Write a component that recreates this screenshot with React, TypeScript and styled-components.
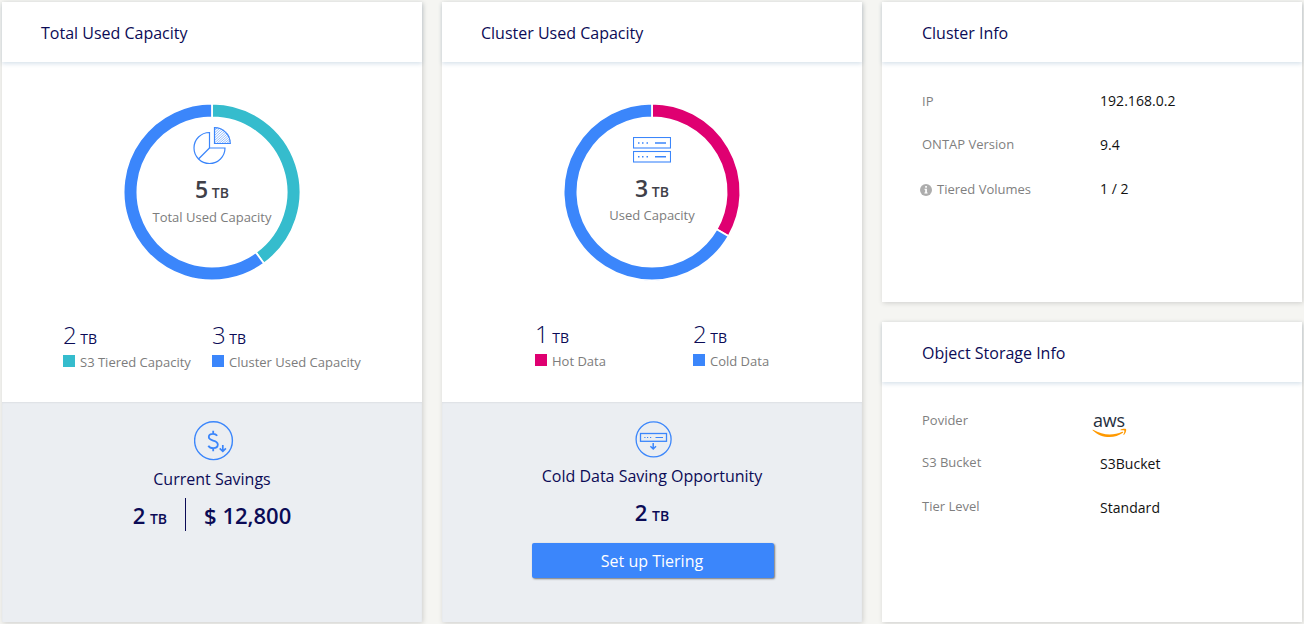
import React from 'react';
import styled, { createGlobalStyle } from 'styled-components';

const BLUE = '#3b86fb';
const TEAL = '#35bccd';
const PINK = '#df0071';
const NAVY = '#0b0b56';

const GlobalStyle = createGlobalStyle`
  * { box-sizing: border-box; }
  body {
    margin: 0;
    background: #f5f5f2;
    font-family: 'Open Sans', 'Noto Sans', sans-serif;
    overflow: hidden;
  }
  svg { display: block; flex: none; }
`;

const Dashboard = styled.main`
  display: grid;
  grid-template-columns: repeat(3, 420px);
  gap: 20px;
  width: 1304px;
  height: 624px;
  padding: 2px;
`;

const Column = styled.div`
  display: flex;
  flex-direction: column;
  gap: 20px;
`;

const Card = styled.section<{ $height?: number }>`
  display: flex;
  flex-direction: column;
  height: ${(p) => p.$height ?? 620}px;
  background: #fff;
  box-shadow: 1px 1px 5px 0 rgba(0, 0, 0, 0.16);
`;

const CardHeader = styled.header`
  height: 60px;
  flex: none;
  padding: 1px 39px 0;
  font-size: 16px;
  line-height: 60px;
  color: ${NAVY};
  box-shadow: 0 2px 4px rgba(70, 120, 160, 0.2);
`;

const InfoHeader = styled(CardHeader)`
  padding-left: 40px;
`;

const ChartArea = styled.div`
  display: grid;
  justify-content: center;
  height: 256px;
  padding-top: 42px;
  > * { grid-area: 1 / 1; }
`;

const ChartCenter = styled.div<{ $top: number }>`
  display: flex;
  flex-direction: column;
  align-items: center;
  padding-top: ${(p) => p.$top}px;
`;

const Total = styled.div<{ $gap: number }>`
  margin-top: ${(p) => p.$gap}px;
  font-size: 23px;
  line-height: 32px;
  font-weight: 600;
  color: #404048;
  white-space: pre;
  small { font-size: 14px; }
`;

const TotalLabel = styled.div<{ $gap: number }>`
  margin-top: ${(p) => p.$gap}px;
  font-size: 13px;
  line-height: 20px;
  color: #7c7c7c;
`;

const Legend = styled.div<{ $left: number; $columns: string; $top: number }>`
  display: grid;
  grid-template-columns: ${(p) => p.$columns};
  height: 84px;
  padding: ${(p) => p.$top}px 0 0 ${(p) => p.$left}px;
`;

const LegendValue = styled.div`
  font-size: 24px;
  line-height: 32px;
  height: 33px;
  font-weight: 300;
  color: ${NAVY};
  white-space: pre;
  small { font-size: 14px; font-weight: 380; }
`;

const LegendLabel = styled.div`
  display: flex;
  align-items: center;
  gap: 5px;
  height: 20px;
  font-size: 13px;
  line-height: 20px;
  color: #7c7c7c;
  white-space: nowrap;
`;

const Swatch = styled.i<{ $color: string }>`
  width: 12px;
  height: 12px;
  margin-top: -2px;
  background: ${(p) => p.$color};
`;

const Summary = styled.div`
  display: flex;
  flex-direction: column;
  align-items: center;
  flex: 1;
  padding-top: 19px;
  background: #ebeef2;
  color: ${NAVY};
  box-shadow: inset 0 1px 2px rgba(0, 0, 0, 0.06);
  > svg { margin-left: 3px; }
`;

const SummaryTitle = styled.div<{ $gap: number }>`
  margin-top: ${(p) => p.$gap}px;
  font-size: 16px;
  line-height: 24px;
`;

const SummaryValues = styled.div`
  display: flex;
  align-items: center;
  height: 34px;
  margin-top: 6px;
  font-size: 22px;
  line-height: 34px;
  font-weight: 600;
  white-space: pre;
  span { padding-top: 2px; }
  small { font-size: 14px; line-height: 0; margin-left: 1px; }
`;

const Divider = styled.i`
  width: 1px;
  height: 33px;
  margin: 0 18px 0 18px;
  background: ${NAVY};
`;

const TieringButton = styled.button`
  width: 242px;
  height: 35px;
  margin: 15px 0 0 2px;
  padding: 1px 2px 0 0;
  border: 0;
  border-radius: 2px;
  background: ${BLUE};
  color: #fff;
  font: 400 16px/34px 'Open Sans', sans-serif;
  box-shadow: 1px 1px 2px rgba(0, 0, 0, 0.5);
`;

const InfoList = styled.dl<{ $top: number }>`
  margin: 0;
  padding: ${(p) => p.$top}px 40px 0;
`;

const InfoRow = styled.div<{ $height: number }>`
  display: grid;
  grid-template-columns: 178px 1fr;
  height: ${(p) => p.$height}px;
`;

const InfoLabel = styled.dt<{ $lift?: number }>`
  display: flex;
  align-items: center;
  height: 20px;
  margin-top: ${(p) => -(p.$lift ?? 0)}px;
  font-size: 13px;
  line-height: 20px;
  color: #7f7f7f;
`;

const InfoValue = styled.dd<{ $shift?: number }>`
  margin: ${(p) => p.$shift ?? 0}px 0 0;
  font-size: 14px;
  line-height: 20px;
  color: #111;
  letter-spacing: 0.04px;
`;

const InfoIcon = styled.svg`
  margin: 1px 5px 0 -2px;
`;

const AwsMark = styled.div`
  width: 36px;
  margin: -1px 0 0 -8px;
  font-size: 18px;
  line-height: 20px;
  font-weight: 500;
  letter-spacing: -0.2px;
  color: #252f3e;
  text-indent: 1px;
  svg { margin-top: -2px; }
`;

type Slice = { color: string; value: number };

const SIZE = 176;
const OUTER = 87.5;
const INNER = 75.5;

function point(radius: number, turn: number) {
  const a = turn * Math.PI * 2;
  return `${88 + radius * Math.sin(a)} ${88 - radius * Math.cos(a)}`;
}

function Donut({ slices }: { slices: Slice[] }) {
  const total = slices.reduce((sum, s) => sum + s.value, 0);
  let start = 0;
  const arcs = slices.map((s) => {
    const from = start;
    const to = from + s.value / total;
    start = to;
    const large = to - from > 0.5 ? 1 : 0;
    return (
      <path
        key={s.color}
        fill={s.color}
        stroke="#fff"
        strokeWidth="1.8"
        d={`M${point(OUTER + 0.9, from)}A${OUTER + 0.9} ${OUTER + 0.9} 0 ${large} 1 ${point(OUTER + 0.9, to)}L${point(INNER - 0.9, to)}A${INNER - 0.9} ${INNER - 0.9} 0 ${large} 0 ${point(INNER - 0.9, from)}Z`}
      />
    );
  });
  return (
    <svg width={SIZE} height={SIZE} viewBox="0 0 176 176" overflow="visible">
      {arcs}
    </svg>
  );
}

function PieIcon() {
  return (
    <svg width="38" height="38" viewBox="0 0 38 38" fill="none" stroke={BLUE} strokeWidth="1.2">
      <path d="M16.5 5.5A15.5 15.5 0 1 0 32 21H16.5Z" />
      <path d="M16.5 21L5.5 32" />
      <path d="M21.5 0.7V16.5H37.3A15.8 15.8 0 0 0 21.5 0.7Z" />
      <path
        strokeWidth="0.55"
        d="M21.5 3.5L24.3 0.9M21.5 6L26.4 1.4M21.5 8.5L28.3 2.1M21.5 11L30.2 3M21.5 13.5L32 4M21.5 16L33.4 5.2M23.5 16.5L34.8 6.4M26 16.5L35.8 7.9M28.5 16.5L36.5 9.7M31 16.5L37 11.6M33.5 16.5L37.3 13.6"
      />
    </svg>
  );
}

function ServerIcon() {
  return (
    <svg width="38" height="26" viewBox="0 0 38 26" fill="none" stroke={BLUE} strokeWidth="1.1">
      <rect x="0.5" y="0.5" width="37" height="10.5" />
      <rect x="0.5" y="14.5" width="37" height="10.5" />
      <path d="M5 6H6.5M9 6H10.5M13.5 6H15M22 6H33M5 19.7H6.5M9 19.7H10.5M13.5 19.7H15M22 19.7H33" strokeWidth="1.4" />
    </svg>
  );
}

function SavingsIcon() {
  return (
    <svg width="40" height="40" viewBox="0 0 40 40" fill="none" stroke={BLUE} strokeWidth="1.4">
      <circle cx="19.5" cy="19.7" r="18.9" />
      <path strokeWidth="1.8" d="M23.2 14.8C22.2 13.4 20.8 12.8 19.1 12.8C16.5 12.8 14.8 14.1 14.8 16.1C14.8 20.8 23.8 18.3 23.8 23.6C23.8 25.9 21.9 27.2 19.2 27.2C17 27.2 15.3 26.4 14.3 24.7M19.2 9.8V13M19.2 27.2V30.2" />
      <path strokeWidth="1.7" d="M28.8 24V30.2M25.7 27.4L28.8 30.3L31.9 27.4" />
    </svg>
  );
}

function ColdDataIcon() {
  return (
    <svg width="38" height="38" viewBox="0 0 38 38" fill="none" stroke={BLUE} strokeWidth="1.3">
      <circle cx="18.6" cy="18.3" r="17.5" />
      <rect x="5.5" y="12.5" width="26" height="7.8" />
      <path strokeWidth="1.2" d="M9.3 16.5H10.5M12 16.5H13.2M15 16.5H16.2M20.5 16.5H28" />
      <path strokeWidth="1.5" d="M18.2 22V27.7M15.4 25.3L18.2 28L21 25.3" />
    </svg>
  );
}

function Info() {
  return (
    <InfoIcon width="12" height="12" viewBox="0 0 12 12">
      <circle cx="6" cy="6" r="6" fill="#adadad" />
      <path d="M5.2 2.1H6.9V3.7H5.2ZM4.5 4.8H6.9V8.5H7.6V9.5H4.4V8.5H5.2V5.7H4.5Z" fill="#fff" />
    </InfoIcon>
  );
}

function AwsLogo() {
  return (
    <AwsMark>
      aws
      <svg width="36" height="11" viewBox="0 0 36 11">
        <path d="M0.6 2.2C0.3 1.9 0.6 1.5 1.1 1.8C11 7.6 21.5 7.7 30.2 3.8C31 3.5 31.5 4.2 30.9 4.8C22.3 11.2 8.8 10.4 0.6 2.2Z" fill="#f90" />
        <path d="M28.4 1.8C30 0.6 33.2 0.5 34 1.1C34.6 1.8 33.9 5.3 32 6.9C31.7 7.2 31.3 7 31.5 6.5C32 5.3 32.7 3.1 32.3 2.6C31.8 2 29.7 2.2 28.6 2.3C28.2 2.3 28.2 2 28.4 1.8Z" fill="#f90" />
      </svg>
    </AwsMark>
  );
}

function LegendItem({ value, label, color }: { value: string; label: string; color: string }) {
  return (
    <div>
      <LegendValue>
        {value}
        <small> TB</small>
      </LegendValue>
      <LegendLabel>
        <Swatch $color={color} />
        {label}
      </LegendLabel>
    </div>
  );
}

export default function App() {
  return (
    <>
      <GlobalStyle />
      <Dashboard>
        <Card>
          <CardHeader>Total Used Capacity</CardHeader>
          <ChartArea>
            <Donut slices={[{ color: TEAL, value: 2 }, { color: BLUE, value: 3 }]} />
            <ChartCenter $top={23}>
              <PieIcon />
              <Total $gap={8}>5<small> TB</small></Total>
              <TotalLabel $gap={-2}>Total Used Capacity</TotalLabel>
            </ChartCenter>
          </ChartArea>
          <Legend $left={61} $columns="149px 1fr" $top={1}>
            <LegendItem value="2" label="S3 Tiered Capacity" color={TEAL} />
            <LegendItem value="3" label="Cluster Used Capacity" color={BLUE} />
          </Legend>
          <Summary>
            <SavingsIcon />
            <SummaryTitle $gap={6}>Current Savings</SummaryTitle>
            <SummaryValues>
              <span>2<small> TB</small></span>
              <Divider />
              <span>$ 12,800</span>
            </SummaryValues>
          </Summary>
        </Card>

        <Card>
          <CardHeader>Cluster Used Capacity</CardHeader>
          <ChartArea>
            <Donut slices={[{ color: PINK, value: 1 }, { color: BLUE, value: 2 }]} />
            <ChartCenter $top={33}>
              <ServerIcon />
              <Total $gap={9}>3<small> TB</small></Total>
              <TotalLabel $gap={-3}>Used Capacity</TotalLabel>
            </ChartCenter>
          </ChartArea>
          <Legend $left={93} $columns="158px 1fr" $top={0}>
            <LegendItem value="1" label="Hot Data" color={PINK} />
            <LegendItem value="2" label="Cold Data" color={BLUE} />
          </Legend>
          <Summary>
            <ColdDataIcon />
            <SummaryTitle $gap={5}>Cold Data Saving Opportunity</SummaryTitle>
            <SummaryValues>
              <span>2<small> TB</small></span>
            </SummaryValues>
            <TieringButton>Set up Tiering</TieringButton>
          </Summary>
        </Card>

        <Column>
          <Card $height={300}>
            <InfoHeader>Cluster Info</InfoHeader>
            <InfoList $top={29}>
              <InfoRow $height={44}>
                <InfoLabel>IP</InfoLabel>
                <InfoValue>192.168.0.2</InfoValue>
              </InfoRow>
              <InfoRow $height={44}>
                <InfoLabel $lift={1}>ONTAP Version</InfoLabel>
                <InfoValue>9.4</InfoValue>
              </InfoRow>
              <InfoRow $height={44}>
                <InfoLabel><Info />Tiered Volumes</InfoLabel>
                <InfoValue>1 / 2</InfoValue>
              </InfoRow>
            </InfoList>
          </Card>
          <Card $height={300}>
            <InfoHeader>Object Storage Info</InfoHeader>
            <InfoList $top={29}>
              <InfoRow $height={42}>
                <InfoLabel $lift={1}>Povider</InfoLabel>
                <InfoValue><AwsLogo /></InfoValue>
              </InfoRow>
              <InfoRow $height={44}>
                <InfoLabel $lift={1}>S3 Bucket</InfoLabel>
                <InfoValue $shift={1}>S3Bucket</InfoValue>
              </InfoRow>
              <InfoRow $height={44}>
                <InfoLabel $lift={1}>Tier Level</InfoLabel>
                <InfoValue $shift={1}>Standard</InfoValue>
              </InfoRow>
            </InfoList>
          </Card>
        </Column>
      </Dashboard>
    </>
  );
}
